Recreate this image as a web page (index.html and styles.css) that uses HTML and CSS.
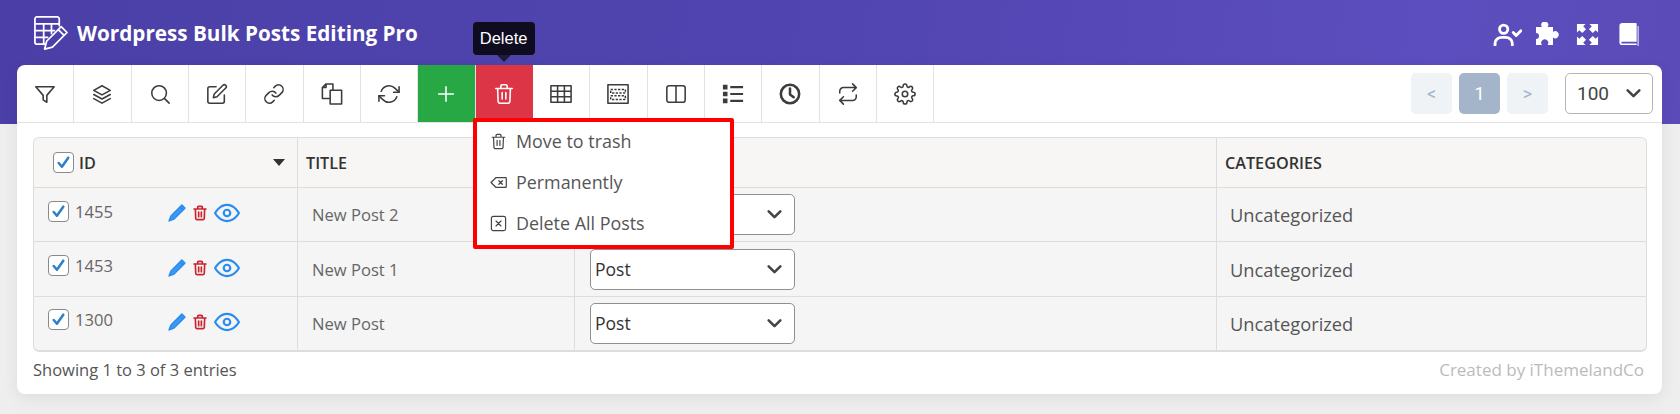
FILE: index.html
```html
<!DOCTYPE html>
<html lang="en">
<head>
    <meta charset="UTF-8">
    <meta name="viewport" content="width=device-width, initial-scale=1.0">
    <title>Wordpress Bulk Posts Editing Pro</title>
    <link rel="stylesheet" href="styles.css">
</head>
<body>
    <svg class="sprite" width="0" height="0">
        <symbol id="i-trash" viewBox="0 0 24 24"><path d="M3 6h18M8.500 5.500V3.500a1.500 1.500 0 0 1 1.500-1.500h4a1.500 1.500 0 0 1 1.500 1.500v2M5 6l.6 14.500A2 2 0 0 0 7.600 22h8.800a2 2 0 0 0 2-1.500L19 6M10 10.500v7M14 10.500v7"/></symbol>
        <symbol id="i-pencil" viewBox="0 0 24 24"><path d="M18.500 1.500l4 4L8 20l-6.500 2.500L4 16zM16 4l4 4" /></symbol>
        <symbol id="i-eye" viewBox="0 0 24 24"><path d="M1 12s4-7.500 11-7.500S23 12 23 12s-4 7.500-11 7.500S1 12 1 12z"/><circle cx="12" cy="12" r="3"/></symbol>
        <symbol id="i-check" viewBox="0 0 16 16"><path d="M3.500 8.500l3 3.500 6-8.500"/></symbol>
        <symbol id="i-chevron" viewBox="0 0 16 16"><path d="M2.500 5l5.500 5.500L13.500 5"/></symbol>
    </svg>

    <header class="top-bar">
        <div class="brand">
            <svg class="brand-icon" viewBox="0 0 36 36"><path d="M27 11V4a2 2 0 0 0-2-2H4a2 2 0 0 0-2 2v24a2 2 0 0 0 2 2h8M2 9h25M2 16h20M2 23h13M11 9v21M19 9v10"/><path d="M29 12l6 6-15 15-8 2 2-8zM26 15l6 6"/></svg>
            <span>Wordpress Bulk Posts Editing Pro</span>
        </div>
        <div class="top-icons">
            <svg class="top-user" viewBox="0 0 30 24"><circle cx="11" cy="6.500" r="4.300"/><path d="M2 23v-2a7 6 0 0 1 7-6h4a7 6 0 0 1 7 6v2M21 10l3 3 5-5"/></svg>
            <svg class="top-puzzle" viewBox="0 0 24 24"><path d="M1 5h6a3.500 3.500 0 1 1 5.500 0H18v5a3.500 3.500 0 1 1 0 5.500V23h-5.500a3.500 3.500 0 1 0-5.500 0H1v-6a3 3 0 1 0 0-6z"/></svg>
            <svg class="top-expand" viewBox="0 0 24 24"><path d="M1 1h9L7.500 3.500l3 3-4 4-3-3L1 10zM23 1h-9l2.500 2.500-3 3 4 4 3-3L23 10zM1 23h9l-2.500-2.500 3-3-4-4-3 3L1 14zM23 23h-9l2.500-2.500-3-3 4-4 3 3L23 14z"/></svg>
            <svg class="top-book" viewBox="0 0 20 24"><path d="M3 0h14a1 1 0 0 1 1 1v22H3a3 3 0 0 1-3-3V3a3 3 0 0 1 3-3zM3 19.500a1 1 0 0 0 0 2h15v-2zM19 3h1v21h-1z" fill-rule="evenodd"/></svg>
        </div>
    </header>

    <main class="card">
        <div class="toolbar">
            <div class="tools">
                <button class="tool"><svg viewBox="0 0 24 24"><path d="M2 4h20l-8 9.500V21l-4-2.500v-5z"/></svg></button>
                <button class="tool"><svg viewBox="0 0 24 24"><path d="M12 3L3 8l9 5 9-5zM3 12.500l9 5 9-5M3 17l9 5 9-5"/></svg></button>
                <button class="tool"><svg viewBox="0 0 24 24"><circle cx="11" cy="11" r="8"/><path d="M17 17l5 5"/></svg></button>
                <button class="tool"><svg viewBox="0 0 24 24"><path d="M11 4H4a2 2 0 0 0-2 2v14a2 2 0 0 0 2 2h14a2 2 0 0 0 2-2v-7"/><path d="M18.500 2.500a2.121 2.121 0 0 1 3 3L12 15l-4 1 1-4z"/></svg></button>
                <button class="tool"><svg viewBox="0 0 24 24"><path d="M10 13a5 5 0 0 0 7.540.54l3-3a5 5 0 0 0-7.070-7.070l-1.720 1.710"/><path d="M14 11a5 5 0 0 0-7.540-.54l-3 3a5 5 0 0 0 7.070 7.070l1.710-1.710"/></svg></button>
                <button class="tool"><svg viewBox="0 0 24 24"><path d="M9 17H1.500V5l4-4H13v7M5.500 1v4h-4"/><path d="M10 8h12.500v15H10z"/></svg></button>
                <button class="tool"><svg viewBox="0 0 24 24"><path d="M23 4v6h-6M1 20v-6h6"/><path d="M3.510 9a9 9 0 0 1 14.850-3.360L23 10M1 14l4.640 4.360A9 9 0 0 0 20.490 15"/></svg></button>
                <button class="tool tool-green"><svg viewBox="0 0 24 24"><path d="M12 4v16M4 12h16"/></svg></button>
                <button class="tool tool-red"><svg><use href="#i-trash"/></svg>
                    <span class="tooltip">Delete</span>
                </button>
                <button class="tool"><svg viewBox="0 0 24 24"><path d="M1 3h22v18H1zM1 9h22M1 15h22M8.300 3v18M15.700 3v18"/></svg></button>
                <button class="tool"><svg viewBox="0 0 24 24"><path d="M1 2h22v20H1z"/><path class="dash" d="M4 7h16v4H4zM4 14h16v4H4z"/></svg></button>
                <button class="tool"><svg viewBox="0 0 24 24"><rect x="2" y="3" width="20" height="18" rx="2.500"/><path d="M12 3v18"/></svg></button>
                <button class="tool"><svg class="icon-list" viewBox="0 0 24 24"><path d="M1 2h5v5H1zM1 9.500h5v5H1zM1 17h5v5H1zM9 3.300h14v2.400H9zM9 10.800h14v2.400H9zM9 18.300h14v2.400H9z"/></svg></button>
                <button class="tool"><svg class="icon-clock" viewBox="0 0 24 24"><circle cx="12" cy="12" r="10"/><path d="M12 6v6.500l4 3"/></svg></button>
                <button class="tool"><svg viewBox="0 0 24 24"><path d="M17 1l4 4-4 4M3 11V9a4 4 0 0 1 4-4h14M7 23l-4-4 4-4M21 13v2a4 4 0 0 1-4 4H3"/></svg></button>
                <button class="tool"><svg viewBox="0 0 24 24"><circle cx="12" cy="12" r="3"/><path d="M19.400 15a1.650 1.650 0 0 0 .33 1.820l.06.06a2 2 0 0 1 0 2.830 2 2 0 0 1-2.830 0l-.06-.06a1.650 1.650 0 0 0-1.820-.33 1.650 1.650 0 0 0-1 1.510V21a2 2 0 0 1-2 2 2 2 0 0 1-2-2v-.09A1.650 1.650 0 0 0 9 19.400a1.650 1.650 0 0 0-1.820.33l-.06.06a2 2 0 0 1-2.830 0 2 2 0 0 1 0-2.830l.06-.06a1.650 1.650 0 0 0 .33-1.820 1.650 1.650 0 0 0-1.510-1H3a2 2 0 0 1-2-2 2 2 0 0 1 2-2h.09A1.650 1.650 0 0 0 4.600 9a1.650 1.650 0 0 0-.33-1.820l-.06-.06a2 2 0 0 1 0-2.830 2 2 0 0 1 2.830 0l.06.06a1.650 1.650 0 0 0 1.820.33H9a1.650 1.650 0 0 0 1-1.510V3a2 2 0 0 1 2-2 2 2 0 0 1 2 2v.09a1.650 1.650 0 0 0 1 1.510 1.650 1.650 0 0 0 1.820-.33l.06-.06a2 2 0 0 1 2.830 0 2 2 0 0 1 0 2.830l-.06.06a1.650 1.650 0 0 0-.33 1.820V9a1.650 1.650 0 0 0 1.510 1H21a2 2 0 0 1 2 2 2 2 0 0 1-2 2h-.09a1.650 1.650 0 0 0-1.510 1z"/></svg></button>
            </div>
            <div class="paging">
                <span class="page-btn">&lt;</span>
                <span class="page-btn page-current">1</span>
                <span class="page-btn">&gt;</span>
                <div class="per-page">100 <svg class="chevron"><use href="#i-chevron"/></svg></div>
            </div>
        </div>

        <div class="delete-menu">
            <div class="menu-item"><svg class="menu-icon"><use href="#i-trash"/></svg>Move to trash</div>
            <div class="menu-item"><svg class="menu-icon" viewBox="0 0 24 24"><path d="M22 5H8.500L1.500 12l7 7H22a1 1 0 0 0 1-1V6a1 1 0 0 0-1-1zM12.500 9.500l5 5M17.500 9.500l-5 5"/></svg>Permanently</div>
            <div class="menu-item"><svg class="menu-icon" viewBox="0 0 24 24"><rect x="2" y="2" width="20" height="20" rx="2.500"/><path d="M8.500 8.500l7 7M15.500 8.500l-7 7"/></svg>Delete All Posts</div>
        </div>

        <div class="grid">
            <div class="row row-head">
                <div class="cell cell-id">
                    <span class="check"><svg><use href="#i-check"/></svg></span>
                    <span>ID</span>
                    <span class="sort"></span>
                </div>
                <div class="cell cell-title">TITLE</div>
                <div class="cell cell-type"></div>
                <div class="cell cell-cat">CATEGORIES</div>
            </div>
            <div class="row">
                <div class="cell cell-id">
                    <span class="check"><svg><use href="#i-check"/></svg></span>
                    <span class="post-id">1455</span>
                    <span class="actions">
                        <svg class="act-edit"><use href="#i-pencil"/></svg>
                        <svg class="act-del"><use href="#i-trash"/></svg>
                        <svg class="act-view"><use href="#i-eye"/></svg>
                    </span>
                </div>
                <div class="cell cell-title">New Post 2</div>
                <div class="cell cell-type"><div class="type-select"><svg class="chevron"><use href="#i-chevron"/></svg></div></div>
                <div class="cell cell-cat">Uncategorized</div>
            </div>
            <div class="row">
                <div class="cell cell-id">
                    <span class="check"><svg><use href="#i-check"/></svg></span>
                    <span class="post-id">1453</span>
                    <span class="actions">
                        <svg class="act-edit"><use href="#i-pencil"/></svg>
                        <svg class="act-del"><use href="#i-trash"/></svg>
                        <svg class="act-view"><use href="#i-eye"/></svg>
                    </span>
                </div>
                <div class="cell cell-title">New Post 1</div>
                <div class="cell cell-type"><div class="type-select">Post <svg class="chevron"><use href="#i-chevron"/></svg></div></div>
                <div class="cell cell-cat">Uncategorized</div>
            </div>
            <div class="row">
                <div class="cell cell-id">
                    <span class="check"><svg><use href="#i-check"/></svg></span>
                    <span class="post-id">1300</span>
                    <span class="actions">
                        <svg class="act-edit"><use href="#i-pencil"/></svg>
                        <svg class="act-del"><use href="#i-trash"/></svg>
                        <svg class="act-view"><use href="#i-eye"/></svg>
                    </span>
                </div>
                <div class="cell cell-title">New Post</div>
                <div class="cell cell-type"><div class="type-select">Post <svg class="chevron"><use href="#i-chevron"/></svg></div></div>
                <div class="cell cell-cat">Uncategorized</div>
            </div>
        </div>

        <div class="card-footer">
            <span>Showing 1 to 3 of 3 entries</span>
            <span class="credit">Created by iThemelandCo</span>
        </div>
    </main>
</body>
</html>
```

FILE: styles.css
```css
body {
    background-color: #eeeeee;
    font-family: "Open Sans", sans-serif;
    color: #444444;
    margin: 0;
    padding: 0;
    height: 414px;
    overflow: hidden;
}

svg {
    fill: none;
    stroke: currentColor;
    stroke-linecap: round;
    stroke-linejoin: round;
}

.sprite {
    position: absolute;
}

/* Header */
.top-bar {
    height: 124px;
    box-sizing: border-box;
    padding: 15px 41px 0 33px;
    display: flex;
    justify-content: space-between;
    align-items: flex-start;
    color: #ffffff;
    background: linear-gradient(100deg, #4b3fa7 0%, #5044b0 45%, #5c4ebe 85%, #5a4bb8 100%);
}

.brand {
    display: flex;
    align-items: center;
    gap: 9px;
    font-size: 20.700px;
    font-weight: 700;
}

.brand-icon {
    width: 35px;
    height: 35px;
    stroke-width: 1.800;
}

.top-icons {
    display: flex;
    align-items: center;
    gap: 13px;
    padding-top: 7px;
}

.top-user {
    width: 29px;
    height: 23px;
    stroke-width: 3;
}

.top-puzzle,
.top-expand,
.top-book {
    fill: currentColor;
    stroke: none;
}

.top-puzzle {
    width: 24px;
    height: 24px;
}

.top-expand {
    width: 23px;
    height: 23px;
    margin: 0 7px 0 4px;
}

.top-book {
    width: 20px;
    height: 23px;
}

/* Card */
.card {
    position: relative;
    margin: -59px 18px 0 17px;
    height: 329px;
    background-color: #ffffff;
    border-radius: 8px;
    box-shadow: 0 4px 16px rgba(0, 0, 0, 0.07);
}

.toolbar {
    height: 57px;
    display: flex;
    justify-content: space-between;
    border-bottom: 1px solid #e2e2e2;
}

.tools {
    display: flex;
}

.tool {
    position: relative;
    width: 57.330px;
    height: 57px;
    padding: 0;
    border: none;
    border-right: 1px solid #e2e2e2;
    background: none;
    color: #3c3c3c;
    display: flex;
    align-items: center;
    justify-content: center;
}

.tool svg {
    width: 22px;
    height: 22px;
    stroke-width: 1.700;
}

.tool .dash {
    stroke-dasharray: 2.500 1.500;
    stroke-linecap: butt;
}

.tool .icon-list {
    fill: currentColor;
    stroke: none;
}

.tool .icon-clock {
    stroke-width: 2.800;
}

.tool-green {
    background-color: #28a745;
    color: #ffffff;
}

.tool-red {
    background-color: #dc3545;
    color: #ffffff;
    border-right: none;
}

.tooltip {
    position: absolute;
    left: -3px;
    top: -43px;
    width: 62px;
    height: 33px;
    line-height: 33px;
    border-radius: 4px;
    background-color: #100c1f;
    color: #ffffff;
    font-family: "Liberation Sans", sans-serif;
    font-size: 16.500px;
    text-align: center;
}

.tooltip::after {
    content: "";
    position: absolute;
    left: 24px;
    top: 33px;
    border: 7px solid transparent;
    border-bottom: none;
    border-top-color: #1f1a35;
}

.paging {
    display: flex;
    align-items: flex-start;
    gap: 7px;
    padding: 8px 9px 0 0;
}

.page-btn {
    width: 41px;
    height: 41px;
    line-height: 41px;
    border-radius: 5px;
    background-color: #eff3f6;
    color: #a3b4c9;
    font-family: "Roboto", sans-serif;
    font-size: 18px;
    text-align: center;
}

.page-current {
    background-color: #a4b5c9;
    color: #ffffff;
}

.per-page {
    margin-left: 10px;
    width: 88px;
    height: 41px;
    box-sizing: border-box;
    padding: 0 10px 0 11px;
    border: 1px solid #b4b4b4;
    border-radius: 5px;
    display: flex;
    align-items: center;
    justify-content: space-between;
    font-family: "Roboto", sans-serif;
    font-size: 19px;
    color: #444444;
}

.chevron {
    width: 17px;
    height: 17px;
    margin-left: auto;
    stroke-width: 2.400;
    color: #444444;
}

/* Delete dropdown */
.delete-menu {
    position: absolute;
    z-index: 5;
    left: 456px;
    top: 53px;
    width: 261px;
    height: 131px;
    box-sizing: border-box;
    padding: 0 0 0 13px;
    background-color: #ffffff;
    border: 4px solid #ff0000;
    border-radius: 2px;
}

.menu-item {
    height: 41px;
    box-sizing: border-box;
    padding-bottom: 3px;
    display: flex;
    align-items: center;
    gap: 9px;
    font-size: 17.900px;
    color: #555555;
}

.menu-icon {
    width: 17px;
    height: 17px;
    stroke-width: 1.700;
    color: #444444;
}

/* Table */
.grid {
    margin: 14px 15px 0 16px;
    border: 1px solid #dddddd;
    border-bottom-width: 2px;
    border-radius: 6px;
    background-color: #f5f5f5;
}

.row {
    display: grid;
    grid-template-columns: 264px 277px 642px 1fr;
    height: 53.400px;
    border-top: 1px solid #dddddd;
    font-size: 16.600px;
    color: #666666;
}

.row-head {
    height: 49px;
    border-top: none;
    font-size: 16.200px;
    font-weight: 600;
    color: #333333;
    background-color: #f7f6f5;
    border-radius: 6px 6px 0 0;
}

.cell {
    display: flex;
    align-items: center;
    border-right: 1px solid #dddddd;
}

.cell:last-child {
    border-right: none;
}

.cell-id {
    padding: 0 0 7px 14px;
    gap: 5px;
}

.row-head .cell-id {
    padding: 0 12px 0 19px;
}

.row:not(.row-head) .cell-title {
    padding-left: 14px;
}

.row-head .cell-title {
    padding-left: 8px;
}

.cell-type {
    padding-left: 15px;
}

.cell-cat {
    padding-left: 8px;
}

.row:not(.row-head) .cell-cat {
    padding-left: 13px;
    font-size: 18.300px;
    color: #555555;
}

.check {
    width: 21px;
    height: 21px;
    box-sizing: border-box;
    border: 1px solid #8a8a8a;
    border-radius: 4px;
    background-color: #ffffff;
    color: #2f80c9;
    display: flex;
    align-items: center;
    justify-content: center;
}

.check svg {
    width: 17px;
    height: 17px;
    stroke-width: 2.400;
}

.sort {
    margin-left: auto;
    border: 6px solid transparent;
    border-bottom: none;
    border-top: 7px solid #333333;
}

.post-id {
    width: 90px;
    padding-left: 1px;
}

.actions {
    display: flex;
    align-items: center;
    gap: 6px;
    margin-left: -2px;
    padding-top: 4px;
}

.actions svg {
    stroke-width: 2;
}

.act-edit {
    width: 18px;
    height: 18px;
    color: #2a8cf0;
    fill: #3f98f2;
}

.act-del {
    width: 16px;
    height: 18px;
    color: #c9242f;
}

.actions .act-del {
    stroke-width: 2.500;
}

.act-view {
    width: 26px;
    height: 26px;
    color: #2a8cf0;
}

.type-select {
    width: 205px;
    height: 41px;
    box-sizing: border-box;
    padding: 0 11px 0 4px;
    border: 1px solid #8f8f8f;
    border-radius: 5px;
    background-color: #ffffff;
    display: flex;
    align-items: center;
    font-size: 17.500px;
    color: #333333;
}

.card-footer {
    display: flex;
    justify-content: space-between;
    align-items: baseline;
    margin: 6px 18px 0 16px;
    font-size: 16.500px;
    color: #555555;
}

.credit {
    font-size: 17px;
    color: #bbbbbb;
}
```
